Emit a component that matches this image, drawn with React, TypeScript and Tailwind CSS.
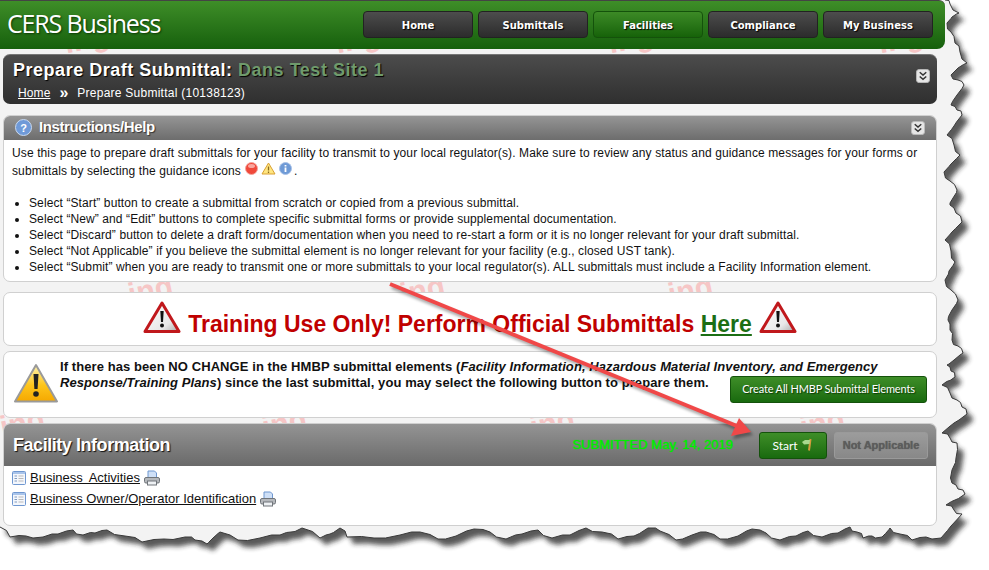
import React from "react";

const sans = "font-['Liberation_Sans',Arial,sans-serif]";

// Torn paper edge, right side then bottom (right to left)
const tornPoints: [number, number][] = [
  [945, 0], [950, 4], [959, 13], [952, 17], [947, 23], [951, 32], [955, 43], [960, 52], [967, 63], [958, 68], [951, 75], [958, 80], [964, 85], [957, 95], [951, 105], [957, 110], [962, 115], [954, 126], [947, 135], [954, 145], [960, 155], [951, 164], [944, 172], [950, 181], [957, 190],
  [953, 198], [950, 205], [956, 213], [962, 222], [952, 232], [945, 240], [951, 251], [955, 262], [949, 271], [945, 280], [951, 290], [958, 300], [952, 310], [948, 320], [950, 330], [952, 340], [958, 346], [963, 353], [954, 360], [947, 365], [951, 371], [955, 377], [948, 381], [942, 385], [950, 393], [957, 400], [962, 407], [967, 414], [954, 423], [942, 433], [950, 438], [957, 443], [956, 458], [952, 470], [952, 483], [958, 489], [965, 494], [955, 500], [946, 505], [954, 510], [962, 514], [951, 526], [941, 538],
  [926, 537], [912, 540], [900, 534], [890, 528], [886, 533], [882, 537], [872, 536], [863, 538], [857, 532], [850, 527], [838, 533], [822, 537], [808, 531], [796, 536], [780, 540], [766, 533], [752, 529], [738, 536], [720, 539], [706, 532], [692, 535], [676, 540], [660, 531], [648, 528], [634, 536], [618, 539], [602, 532], [586, 528], [570, 535], [552, 538], [538, 530], [522, 534], [506, 539], [490, 532], [474, 529], [456, 536], [438, 539], [420, 532], [400, 535], [374, 538], [347, 537], [340, 528], [330, 534], [320, 538], [302, 528], [291, 532], [280, 535], [260, 538], [238, 540], [220, 532], [213, 538], [207, 544], [195, 540], [185, 537], [164, 539], [142, 542], [125, 536], [107, 530], [95, 533], [83, 535], [73, 530], [58, 534], [43, 537], [26, 536], [10, 537], [0, 527],
];

// adds the small nicks between the hand-placed points
const tornEdge: [number, number][] = tornPoints.flatMap((p, i) => {
  const next = tornPoints[i + 1];
  if (!next) return [p];
  const nick = i % 3 === 0 ? 1.5 : i % 3 === 1 ? -1.5 : 1;
  const mid: [number, number] = [(p[0] + next[0]) / 2 + nick, (p[1] + next[1]) / 2 - nick];
  return [p, mid];
});

const paper = "M0 0 " + tornEdge.map(([x, y]) => `L${x} ${y}`).join(" ") + " Z";
const edgeLine = tornEdge.map(([x, y]) => `${x},${y}`).join(" ");
const outside = "M989 0 L989 570 L0 570 L0 527 " + [...tornEdge].reverse().map(([x, y]) => `L${x} ${y}`).join(" ") + " Z";

const watermarks = [
  { x: 64, y: 24 }, { x: 335, y: 24 }, { x: 608, y: 24 }, { x: 878, y: 24 },
  { x: 128, y: 275 }, { x: 400, y: 275 }, { x: 668, y: 275 },
  { x: 0, y: 408 }, { x: 262, y: 408 }, { x: 530, y: 408 }, { x: 800, y: 408 },
];

const navItems = ["Home", "Submittals", "Facilities", "Compliance", "My Business"];

const bullets = [
  "Select “Start” button to create a submittal from scratch or copied from a previous submittal.",
  "Select “New” and “Edit” buttons to complete specific submittal forms or provide supplemental documentation.",
  "Select “Discard” button to delete a draft form/documentation when you need to re-start a form or it is no longer relevant for your draft submittal.",
  "Select “Not Applicable” if you believe the submittal element is no longer relevant for your facility (e.g., closed UST tank).",
  "Select “Submit” when you are ready to transmit one or more submittals to your local regulator(s). ALL submittals must include a Facility Information element.",
];

const CollapseIcon = () => (
  <svg width="14" height="14" viewBox="0 0 15 15">
    <rect x="0.5" y="0.5" width="14" height="14" rx="3" fill="#e6e6e6" stroke="#bbb" />
    <path d="M4 3.5 L7.5 6.5 L11 3.5 M4 8 L7.5 11 L11 8" fill="none" stroke="#333" strokeWidth="1.6" />
  </svg>
);

const BigTriangle = () => (
  <svg width="38" height="33" viewBox="0 0 38 33" className="-mt-[4px]">
    <defs>
      <linearGradient id="bigT" x1="0" y1="0" x2="1" y2="1">
        <stop offset="0" stopColor="#ffffff" />
        <stop offset="0.7" stopColor="#e8e8e8" />
        <stop offset="1" stopColor="#aaaaaa" />
      </linearGradient>
    </defs>
    <path d="M19 2 L36 30.5 L2 30.5 Z" fill="url(#bigT)" stroke="#c0181c" strokeWidth="3" strokeLinejoin="round" />
    <path d="M17.3 10 H20.7 L20 21 H18 Z" fill="#111" />
    <circle cx="19" cy="24.5" r="2" fill="#111" />
  </svg>
);

const YellowTriangle = () => (
  <svg width="46" height="41" viewBox="0 0 46 41">
    <defs>
      <linearGradient id="yelT" x1="0" y1="0" x2="0" y2="1">
        <stop offset="0" stopColor="#fff3b0" />
        <stop offset="0.55" stopColor="#fdc51c" />
        <stop offset="1" stopColor="#f5a800" />
      </linearGradient>
    </defs>
    <path d="M23 2 L44 38.5 L2 38.5 Z" fill="url(#yelT)" stroke="#9a9a9a" strokeWidth="2" strokeLinejoin="round" />
    <path d="M20.5 11 H25.5 L24.6 26 H21.4 Z" fill="#222" />
    <circle cx="23" cy="31" r="2.8" fill="#222" />
  </svg>
);

const FormIcon = () => (
  <svg width="14" height="14" viewBox="0 0 14 14" className="shrink-0">
    <rect x="0.5" y="0.5" width="13" height="13" rx="1" fill="#f4f7fc" stroke="#6f97d0" />
    <rect x="1" y="1" width="12" height="2" fill="#a9c4ea" />
    <path d="M2.5 5 H5 M2.5 7.5 H5 M2.5 10 H5" stroke="#7f9ac0" strokeWidth="1.2" />
    <path d="M6.5 5 H11.5 M6.5 7.5 H11.5 M6.5 10 H11.5" stroke="#b9b9b9" strokeWidth="1.2" />
  </svg>
);

const PrinterIcon = () => (
  <svg width="16" height="16" viewBox="0 0 16 16" className="shrink-0">
    <path d="M4 8 V1 H10.5 L12.5 3 V8 Z" fill="#cfe0f7" stroke="#6f97d0" />
    <rect x="0.5" y="7.5" width="15" height="5.5" rx="1.5" fill="#b5b8bc" stroke="#70757a" />
    <rect x="3.5" y="11" width="9" height="4" fill="#eef1f4" stroke="#70757a" />
  </svg>
);

const StatusIcons = () => (
  <span className="inline-flex items-center gap-[3px] align-[0px] ml-[4px] mr-[2px]">
    <svg width="13" height="13" viewBox="0 0 13 13">
      <circle cx="6.5" cy="6.5" r="6" fill="#f0493b" stroke="#f3a49c" />
      <ellipse cx="6.5" cy="4" rx="3.5" ry="2" fill="#f9a79f" />
    </svg>
    <svg width="15" height="13" viewBox="0 0 15 13">
      <path d="M7.5 1 L14 12 H1 Z" fill="#ffe680" stroke="#d9a032" strokeLinejoin="round" />
      <path d="M7.5 4.5 V8.5 M7.5 9.5 V11" stroke="#8a6a20" strokeWidth="1.3" />
    </svg>
    <svg width="13" height="13" viewBox="0 0 13 13">
      <circle cx="6.5" cy="6.5" r="6" fill="#6e9ad6" stroke="#a8c1e6" />
      <path d="M6.5 3 V4.5 M6.5 5.5 V10" stroke="#fff" strokeWidth="1.8" />
    </svg>
  </span>
);

const Panel = ({ className, children }: { className: string; children: React.ReactNode }) => (
  <div className={`bg-white border border-[#d0d0d0] rounded-[7px] ${className}`}>{children}</div>
);

export default function App() {
  return (
    <div className={`relative w-[989px] h-[570px] overflow-hidden bg-[#f3f3f3] ${sans}`}>
      {/* Watermark behind the panels */}
      {watermarks.map((w, i) => (
        <span
          key={i}
          className="absolute text-[30px] leading-none font-bold text-[#f6c6c6] -rotate-[12deg]"
          style={{ left: w.x, top: w.y }}
        >
          ing
        </span>
      ))}

      <div className="relative w-[945px] flex flex-col">
        {/* Top bar */}
        <header className="h-[49px] flex items-center justify-between pl-[7px] pr-[12px] rounded-br-[8px] rounded-tr-[6px] border-t border-[#444] bg-gradient-to-b from-[#3e8e28] to-[#15600c]">
          <span className="font-['Open_Sans',sans-serif] text-[25px] leading-none tracking-[-1.15px] -mt-[3px] text-white [text-shadow:1px_1px_2px_#0c3a06]">
            CERS Business
          </span>
          <nav className="flex gap-[5px] -mt-[1px]">
            {navItems.map((item) => (
              <a
                key={item}
                className={`w-[110px] h-[27px] pt-[2px] flex items-center justify-center rounded-[4px] border font-['DejaVu_Sans',sans-serif] text-[10px] font-bold text-white [text-shadow:1px_1px_1px_#000] ${
                  item === "Facilities"
                    ? "border-[#14520b] bg-gradient-to-b from-[#3c8a26] to-[#166309]"
                    : "border-[#222] bg-gradient-to-b from-[#4d4d4d] to-[#2c2c2c]"
                }`}
              >
                {item}
              </a>
            ))}
          </nav>
        </header>

        <main className="flex flex-col pl-[3px] pr-[8px] pt-[5px]">
          {/* Page title */}
          <section className="h-[50px] rounded-[7px] border-t border-[#777] bg-gradient-to-b from-[#4c4c4c] to-[#2f2f2f] flex justify-between pl-[10px] pr-[7px]">
            <div>
              <h1 className="text-[18px] leading-[22px] mt-[4px] font-bold text-white tracking-[0.52px] [text-shadow:1px_1px_1px_#000]">
                Prepare Draft Submittal: <span className="text-[#6f9a6c]">Dans Test Site 1</span>
              </h1>
              <p className="mt-[4px] ml-[5px] text-[12px] leading-[16px] text-white flex items-center">
                <a className="underline tracking-[0.1px]">Home</a>
                <span className="mx-[9px] text-[16px] leading-[14px] font-bold">»</span>
                <span className="tracking-[0.25px]">Prepare Submittal (10138123)</span>
              </p>
            </div>
            <div className="mt-[14px]">
              <CollapseIcon />
            </div>
          </section>

          {/* Instructions */}
          <section className="mt-[11px] h-[167px] rounded-[7px] border border-[#d0d0d0] bg-white overflow-hidden">
            <div className="h-[25px] -mx-[1px] -mt-[1px] bg-gradient-to-b from-[#979797] to-[#6d6d6d] flex items-center justify-between pl-[12px] pr-[12px]">
              <div className="flex items-center gap-[7px]">
                <svg width="17" height="17" viewBox="0 0 17 17">
                  <circle cx="8.5" cy="8.5" r="8" fill="#6f9ad8" stroke="#c9d9ef" />
                  <text x="8.5" y="12.5" textAnchor="middle" fontSize="11" fontWeight="bold" fill="#fff">?</text>
                </svg>
                <h2 className="text-[15px] font-bold text-white tracking-[-0.4px] [text-shadow:1px_1px_1px_#333]">Instructions/Help</h2>
              </div>
              <CollapseIcon />
            </div>
            <div className="pl-[8px] pr-[8px] text-[12px] text-[#111] tracking-[0.115px]">
              <p className="leading-[17px] mt-[5px]">
                Use this page to prepare draft submittals for your facility to transmit to your local regulator(s). Make sure to review any status and guidance messages for your forms or<br />
                submittals by selecting the guidance icons
                <StatusIcons />.
              </p>
              <ul className="mt-[15px] list-disc pl-[17px] leading-[16px]">
                {bullets.map((b) => (
                  <li key={b} className="whitespace-nowrap tracking-[0.1px]">{b}</li>
                ))}
              </ul>
            </div>
          </section>

          {/* Training banner */}
          <Panel className="mt-[10px] h-[54px] flex items-center justify-center gap-[7px]">
            <BigTriangle />
            <p className="mt-[10px] text-[23px] font-bold text-[#c00000] whitespace-nowrap">
              Training Use Only! Perform Official Submittals <a className="text-[#1b6e14] underline">Here</a>
            </p>
            <BigTriangle />
          </Panel>

          {/* HMBP notice */}
          <Panel className="mt-[5px] h-[67px] flex pl-[9px] pr-[9px]">
            <div className="mt-[11px]">
              <YellowTriangle />
            </div>
            <div className="ml-[1px] mt-[7px] flex-1 relative">
              <p className="text-[13px] leading-[16px] font-bold text-[#111] tracking-[0.08px] whitespace-nowrap">
                If there has been NO CHANGE in the HMBP submittal elements (<i>Facility Information, Hazardous Material Inventory, and Emergency<br />Response/Training Plans</i>) since the last submittal, you may select the following button to prepare them.
              </p>
              <a className="absolute right-0 top-[17px] w-[197px] h-[27px] flex items-center justify-center whitespace-nowrap rounded-[3px] border border-[#14520b] bg-gradient-to-b from-[#3e8e28] to-[#186a0e] font-['Lato',sans-serif] text-[11px] tracking-[-0.15px] text-white [text-shadow:1px_1px_1px_#0c3a06]">
                Create All HMBP Submittal Elements
              </a>
            </div>
          </Panel>

          {/* Facility Information */}
          <section className="mt-[5px] h-[103px] rounded-[7px] border border-[#cfcfcf] bg-white overflow-hidden">
            <div className="h-[43px] -mx-[1px] -mt-[1px] border-t border-[#aaa] bg-gradient-to-b from-[#949494] to-[#6a6a6a] flex items-center pl-[10px] pr-[9px]">
              <h2 className="text-[18px] font-bold text-white tracking-[-0.45px] [text-shadow:1px_1px_1px_#111]">Facility Information</h2>
              <span className="ml-auto text-[13px] text-[#00ee00] tracking-[0.02px] [text-shadow:0_0_1px_#00ee00]">SUBMITTED May. 14, 2019</span>
              <a className="ml-[26px] w-[68px] h-[27px] pt-[1px] flex items-center justify-center gap-[3px] rounded-[3px] border border-[#14520b] bg-gradient-to-b from-[#3e8e28] to-[#186a0e] font-['Lato',sans-serif] text-[12px] text-white">
                Start
                <svg width="13" height="13" viewBox="0 0 13 13" className="-mt-[3px]">
                  <path d="M9.5 1 L8 12.5" stroke="#d79a3c" strokeWidth="2" />
                  <path d="M1 4 L4 2 L9 2 L8.5 6 L3 6.5 Z" fill="#a9d98f" />
                </svg>
              </a>
              <a className="ml-[7px] w-[94px] h-[27px] pt-[1px] flex items-center justify-center rounded-[3px] border border-[#9a9a9a] bg-gradient-to-b from-[#9c9c9c] to-[#888] text-[11px] font-bold text-[#5c5c5c] [text-shadow:0_0_1px_#555]">
                Not Applicable
              </a>
            </div>
            <ul className="pl-[8px] pt-[1px] text-[13px] leading-[21px] text-[#111]">
              <li className="flex items-center gap-[4px]">
                <FormIcon />
                <a className="underline [word-spacing:3px]">Business Activities</a>
                <PrinterIcon />
              </li>
              <li className="flex items-center gap-[4px]">
                <FormIcon />
                <a className="underline">Business Owner/Operator Identification</a>
                <PrinterIcon />
              </li>
            </ul>
          </section>
        </main>
      </div>

      {/* Torn screenshot edge and callout arrow, drawn over the page */}
      <svg width="989" height="570" viewBox="0 0 989 570" className="absolute inset-0 pointer-events-none">
        <defs>
          <clipPath id="outsideClip">
            <path d={outside} />
          </clipPath>
          <filter id="tornBlur" x="-5%" y="-5%" width="110%" height="110%">
            <feGaussianBlur stdDeviation="2.5" />
          </filter>
          <filter id="arrowBlur">
            <feGaussianBlur stdDeviation="1.5" />
          </filter>
        </defs>
        <path d={outside} fill="#ffffff" />
        <g clipPath="url(#outsideClip)">
          <path d={paper} transform="translate(6 7)" fill="#222" opacity="0.75" filter="url(#tornBlur)" />
        </g>
        <polyline points={edgeLine} fill="none" stroke="#3a3a3a" strokeWidth="1" />
        <g transform="translate(2 3)" opacity="0.35" filter="url(#arrowBlur)">
          <path d="M390 284 L737 426" stroke="#000" strokeWidth="4" />
          <path d="M751 432 L731 436 L739 418 Z" fill="#000" />
        </g>
        <path d="M390 284 L737 426" stroke="#f04848" strokeWidth="4" />
        <path d="M751 432 L731 436 L739 418 Z" fill="#f04848" />
      </svg>
    </div>
  );
}
